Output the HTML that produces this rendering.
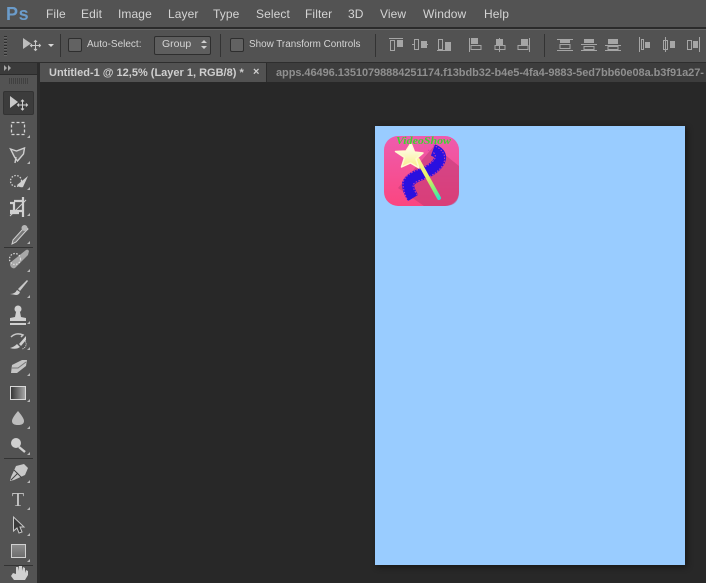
<!DOCTYPE html>
<html><head><meta charset="utf-8"><style>
html,body{margin:0;padding:0;background:#282828}
#r{position:relative;width:706px;height:583px;overflow:hidden;background:#282828;font-family:"Liberation Sans",sans-serif}
.a{position:absolute}
.m{position:absolute;top:7px;font-size:12px;line-height:15px;color:#d4d4d4;white-space:nowrap;letter-spacing:.1px}
.cb{position:absolute;top:38px;width:12px;height:12px;border:1px solid #2e2e2e;border-radius:2px;background:#626262}
.sep{position:absolute;top:34px;width:1px;height:23px;background:#333}
svg{position:absolute;overflow:visible}
</style></head><body><div id="r">

<div class="a" style="left:0;top:0;width:706px;height:28px;background:#535353"></div>
<div class="a" style="left:0;top:27px;width:706px;height:2px;background:#2b2b2b"></div>
<div class="a" style="left:0;top:29px;width:706px;height:33px;background:#525252;border-top:1px solid #666"></div>
<div class="a" style="left:0;top:62px;width:706px;height:1px;background:#2e2e2e"></div>

<div class="a" style="left:6px;top:0;font:bold 18px/28px 'Liberation Sans',sans-serif;color:#6b9ccb;letter-spacing:.6px">Ps</div>
<div class="m" style="left:46px">File</div>
<div class="m" style="left:81px">Edit</div>
<div class="m" style="left:118px">Image</div>
<div class="m" style="left:168px">Layer</div>
<div class="m" style="left:213px">Type</div>
<div class="m" style="left:256px">Select</div>
<div class="m" style="left:305px">Filter</div>
<div class="m" style="left:348px">3D</div>
<div class="m" style="left:380px">View</div>
<div class="m" style="left:423px">Window</div>
<div class="m" style="left:484px">Help</div>

<div class="a" style="left:4px;top:36px;width:3px;height:20px;background:repeating-linear-gradient(#2c2c2c 0 1px,#666 1px 2px,#525252 2px 3px)"></div>
<svg style="left:0;top:0" width="706" height="63">
<path d="M23 38v11l8-5.500z" fill="#bdbdbd"/>
<path d="M35.500 41v9M31 45.500h9M34 42l1.500-1.500 1.500 1.500M34 49l1.500 1.500 1.500-1.500M32 44l-1.500 1.500 1.500 1.500M39 44l1.500 1.500-1.500 1.500" stroke="#c8c8c8" stroke-width="1" fill="none"/>
<path d="M48 44h6l-3 3z" fill="#d8d8d8"/>
</svg>
<div class="sep" style="left:60px"></div>
<div class="cb" style="left:68px"></div>
<div class="a" style="left:87px;top:38px;font-size:10px;line-height:13px;color:#d4d4d4">Auto-Select:</div>
<div class="a" style="left:154px;top:36px;width:55px;height:17px;border:1px solid #2e2e2e;border-radius:2px;background:#5e5e5e"></div>
<div class="a" style="left:162px;top:38px;font-size:10.500px;line-height:13px;color:#d4d4d4">Group</div>
<svg style="left:0;top:0" width="706" height="63">
<path d="M201 43l3-3 3 3zM201 46l3 3 3-3z" fill="#d0d0d0"/>
</svg>
<div class="sep" style="left:220px"></div>
<div class="cb" style="left:230px"></div>
<div class="a" style="left:249px;top:38px;font-size:9.900px;line-height:13px;color:#d4d4d4;white-space:nowrap">Show Transform Controls</div>
<div class="sep" style="left:375px"></div>
<div class="sep" style="left:544px"></div>
<svg style="left:0;top:0" width="706" height="63" fill="none" stroke="#a6a6a6" stroke-width="1">
<path d="M389 38.500h14M390.500 40.500h4v10h-4z"/><rect x="397" y="40" width="6" height="7" fill="#a6a6a6" stroke="none"/>
<path d="M412 44.500h2M421 44.500h7M414.500 39.500h4v10h-4z"/><rect x="421" y="41" width="6" height="7" fill="#a6a6a6" stroke="none"/>
<path d="M437 50.500h14M438.500 39.500h4v10h-4z"/><rect x="445" y="42" width="6" height="8" fill="#a6a6a6" stroke="none"/>
<path d="M469.500 38v14M471 45.500h10v4h-10z"/><rect x="471" y="38" width="7" height="6" fill="#a6a6a6" stroke="none"/>
<path d="M499.500 38v14M495 45.500h10v4h-10z"/><rect x="496" y="39" width="7" height="6" fill="#a6a6a6" stroke="none"/>
<path d="M529.500 38v14M518 45.500h10v4h-10z"/><rect x="521" y="39" width="7" height="6" fill="#a6a6a6" stroke="none"/>
<path d="M557 39.500h16M557 50.500h16M560 44.500h10v4h-10z"/><rect x="560" y="39" width="10" height="4" fill="#a6a6a6" stroke="none"/>
<path d="M581 44.500h16M581 50.500h16M584 46.500h10v3h-10z"/><rect x="584" y="39" width="10" height="4" fill="#a6a6a6" stroke="none"/>
<path d="M605 45.500h16M605 50.500h16M608 46.500h10v3h-10z"/><rect x="608" y="39" width="10" height="5" fill="#a6a6a6" stroke="none"/>
<path d="M639.500 37v15M641.500 39.500h2v10h-2z"/><rect x="645" y="42" width="5" height="6" fill="#a6a6a6" stroke="none"/>
<path d="M665.500 37v15M663.500 40.500h4v9h-4z"/><rect x="670" y="41" width="5" height="7" fill="#a6a6a6" stroke="none"/>
<path d="M699.500 37v15M687.500 40.500h4v9h-4z"/><rect x="693" y="41" width="5" height="7" fill="#a6a6a6" stroke="none"/>
</svg>

<div class="a" style="left:40px;top:63px;width:666px;height:19px;background:#3d3d3d"></div>
<div class="a" style="left:40px;top:63px;width:226px;height:19px;background:#525252"></div>
<div class="a" style="left:266px;top:63px;width:1px;height:19px;background:#2c2c2c"></div>
<div class="a" style="left:49px;top:66px;font-size:11px;font-weight:bold;line-height:14px;color:#cfcfcf;white-space:nowrap">Untitled-1 @ 12,5% (Layer 1, RGB/8) *</div>
<div class="a" style="left:253px;top:66px;font-size:11px;font-weight:bold;line-height:13px;color:#d0d0d0">×</div>
<div class="a" style="left:276px;top:66px;font-size:11px;font-weight:bold;line-height:14px;color:#8f8f8f;white-space:nowrap;letter-spacing:-.06px">apps.46496.13510798884251174.f13bdb32-b4e5-4fa4-9883-5ed7bb60e08a.b3f91a27-</div>

<div class="a" style="left:0;top:63px;width:37px;height:520px;background:#535353"></div>
<div class="a" style="left:37px;top:63px;width:3px;height:520px;background:#2c2c2c"></div>
<div class="a" style="left:0;top:63px;width:37px;height:11px;background:#3b3b3b;border-bottom:1px solid #2b2b2b"></div>
<svg style="left:0;top:0" width="40" height="583">
<path d="M4 65v6l3-3zM8 65v6l3-3z" fill="#a8a8a8"/>
<path d="M9 79h19M9 81h19M9 83h19" stroke="#2e2e2e" stroke-dasharray="1 1" fill="none"/>
</svg>
<div class="a" style="left:3px;top:91px;width:29px;height:22px;background:#3c3c3c;border:1px solid #333;border-radius:2px"></div>

<svg style="left:0;top:0" width="40" height="583">
<path d="M10 96v12l8-6z" fill="#c9c9c9"/>
<path d="M22.500 100v10M18 105h9M21 101.500l1.500-1.500 1.500 1.500M21 108.500l1.500 1.500 1.500-1.500M19 103.500l-1.500 1.500 1.500 1.500M26 103.500l1.500 1.500-1.500 1.500" stroke="#d0d0d0" stroke-width="1" fill="none"/>
<rect x="11.500" y="122.500" width="13" height="12" fill="none" stroke="#d4d4d4" stroke-width="1.300" stroke-dasharray="3 2"/>
<path d="M10.500 149l6 2 8-3-1 6-6 7-3-4z" fill="#666" stroke="#cfcfcf" stroke-width="1.400"/>
<path d="M16 157l-1 6" stroke="#cfcfcf" stroke-width="1.400"/>
<circle cx="16" cy="181" r="5.500" fill="none" stroke="#d0d0d0" stroke-width="1.300" stroke-dasharray="1.500 1.500"/>
<path d="M17 185l11-9-5 11q-3 1-6-2z" fill="#cfcfcf"/>
<path d="M14 201h9v10M19 213h-9M10 203h4v8h9v6M23 197v4M10 211h4" fill="none" stroke="#d0d0d0" stroke-width="2.200"/>
<path d="M26 200l-16 16" stroke="#d0d0d0" stroke-width="1"/>
<path d="M25 226l3 3-3 3-9 10-4 2 1-4 10-11z" fill="#777" stroke="#d0d0d0" stroke-width="1"/>
<circle cx="24.500" cy="228" r="3" fill="#b4b4b4"/>
<path d="M21 254l5-4q2-1 3 1l-1 4-13 13q-2 1-4-1-2-3 0-5z" fill="#a8a8a8"/>
<circle cx="15" cy="259" r="5.500" fill="none" stroke="#ddd" stroke-width="1.200" stroke-dasharray="1.500 1.500"/>
<path d="M27 280l-9 9 2 2 8-10z" fill="#c8c8c8"/>
<path d="M10 294q5 0 7-4l3 2q-1 3-4 3z" fill="#cfcfcf"/>
<circle cx="18" cy="309" r="3.500" fill="#d0d0d0"/>
<path d="M16 312h4l1 5 5 1v3H10v-3l5-1z" fill="#d0d0d0"/>
<rect x="10" y="323" width="16" height="2" fill="#d0d0d0"/>
<path d="M11 337q5-5 12-2l-2 2" fill="none" stroke="#c8c8c8" stroke-width="1.500"/>
<path d="M26 336l-7 8 2 2 5-6z" fill="#d0d0d0"/>
<path d="M10 348q4-1 7-4l3 3q-4 3-10 1z" fill="#cfcfcf"/>
<path d="M24 340a5 5 0 0 1-2 9" fill="none" stroke="#ddd" stroke-dasharray="1 1"/>
<path d="M12 365l10-5 5 0-1 6-9 7-6 0z" fill="#c4c4c4"/>
<path d="M11 368h7l8-6" stroke="#777" fill="none"/>
<defs>
<linearGradient id="g" x1="0" x2="1"><stop offset="0" stop-color="#333"/><stop offset="1" stop-color="#aaa"/></linearGradient>
<linearGradient id="h" x1="0" y1="0" x2="0" y2="1"><stop offset="0" stop-color="#8c8c8c"/><stop offset="1" stop-color="#6c6c6c"/></linearGradient>
</defs>
<rect x="10.500" y="386.500" width="15" height="13" fill="url(#g)" stroke="#d8d8d8"/>
<path d="M18 411q-6 7-6 10 0 4 6 4t6-4q0-3-6-10z" fill="#bdbdbd"/>
<circle cx="16" cy="443" r="5" fill="#d0d0d0"/>
<path d="M19 447l6 5" stroke="#d0d0d0" stroke-width="2.400"/>
<path d="M24 464l4 4-3 7-11 5-4 1 1-4 5-11z" fill="#c8c8c8"/>
<path d="M11 480l7-7M14 470l8 8" stroke="#444"/>
<text x="18" y="506" text-anchor="middle" font-family="Liberation Serif,serif" font-size="20" fill="#c4c4c4">T</text>
<path d="M13.500 517v14l3.500-3 2 5 3-1-2-5h4z" fill="#3a3a3a" stroke="#c8c8c8"/>
<rect x="11.500" y="544.500" width="14" height="13" fill="url(#h)" stroke="#d0d0d0"/>
<path d="M11 576l3 4h11l3-5v-4l-2-1-1 3v-5l-2-1-1 4v-5h-3l-1 5v-4l-2 0v7l-3-1z" fill="#d0d0d0"/>
<path d="M27 138h3v-3zM27 164h3v-3zM27 190h3v-3zM27 216h3v-3zM27 244h3v-3zM27 272h3v-3zM27 298h3v-3zM27 324h3v-3zM27 350h3v-3zM27 376h3v-3zM27 402h3v-3zM27 429h3v-3zM27 455h3v-3zM27 483h3v-3zM27 510h3v-3zM27 536h3v-3zM27 562h3v-3z" fill="#b8b8b8"/>
<path d="M4 247.500h29M4 458.500h29M4 565.500h29" stroke="#333" fill="none"/>
</svg>

<div class="a" style="left:375px;top:126px;width:310px;height:439px;background:#99ccff;box-shadow:2px 2px 6px rgba(0,0,0,.45)"></div>

<svg style="left:384px;top:136px" width="75" height="70" viewBox="0 0 75 70">
<defs>
<linearGradient id="p" x1="0" y1="0" x2="0" y2="1"><stop offset="0" stop-color="#ee5cae"/><stop offset="1" stop-color="#fb4680"/></linearGradient>
<linearGradient id="w" gradientUnits="userSpaceOnUse" x1="32" y1="22" x2="56" y2="64"><stop offset="0" stop-color="#fff8a0"/><stop offset=".5" stop-color="#e0f060"/><stop offset=".8" stop-color="#70f080"/><stop offset="1" stop-color="#20e0d8"/></linearGradient>
<linearGradient id="s" x1="0" y1="0" x2="0" y2="1"><stop offset="0" stop-color="#ffffff"/><stop offset="1" stop-color="#f8ee88"/></linearGradient>
</defs>
<rect width="75" height="70" rx="14" fill="url(#p)"/>
<path d="M50 10L75 30v26q0 14-14 14H40L14 52z" fill="#b8366f" opacity=".5"/>
<path d="M49 14Q60 18 54 27Q49 34 38 38Q26 42 24 48Q24 54 29 62" fill="none" stroke="#2a10e0" stroke-width="12"/>
<path d="M49 9Q65 16 59 29Q53 38 40 43Q30 46 29 49Q29 53 34 60M44 14L50 17Q53 21 49 25Q44 30 36 33Q21 38 19 47Q19 55 24 65" fill="none" stroke="#d83fa8" stroke-width="1" stroke-dasharray="1.500 1.500"/>
<path d="M34 24L55 62" stroke="url(#w)" stroke-width="4" stroke-linecap="round"/>
<path d="M27 7l3.500 9 8.500 1-7 6 3 9-8.500-5-9 4 3-9.500-9-6 10.500-.5z" fill="url(#s)" stroke="#fffad0" stroke-width="1.500" stroke-linejoin="round"/>
<text x="12" y="8" textLength="55" lengthAdjust="spacingAndGlyphs" font-family="Liberation Serif,serif" font-style="italic" font-weight="bold" font-size="10" fill="#3ed62e">VideoShow</text>
</svg>

</div></body></html>
